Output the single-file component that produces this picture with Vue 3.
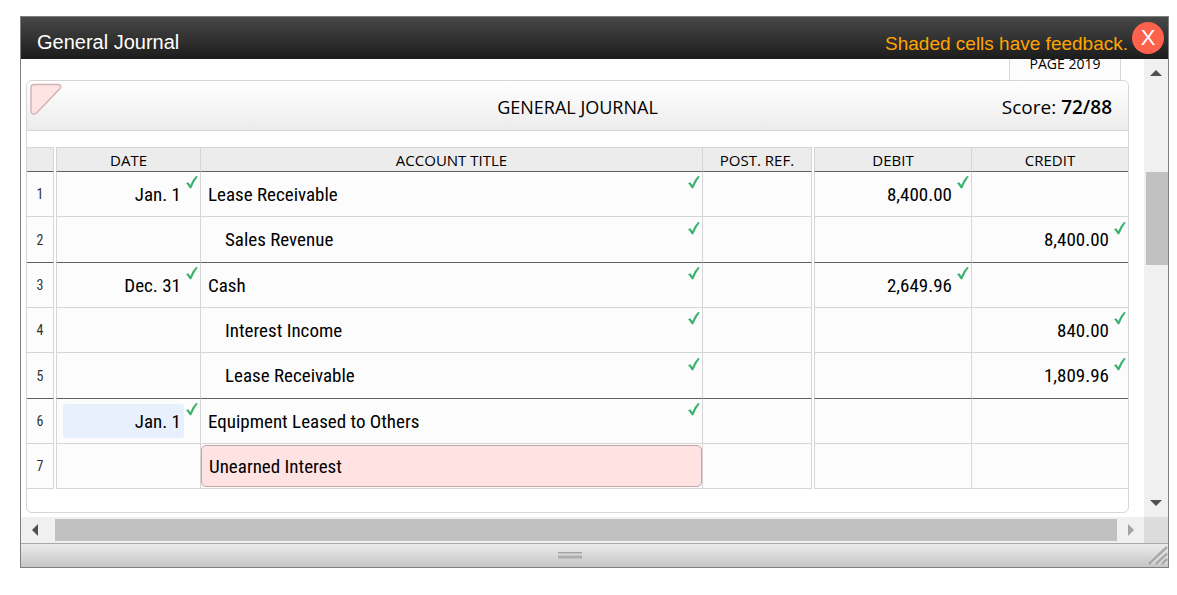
<script setup>
import { ref } from "vue";

const columns = [
  { key: "date", label: "DATE" },
  { key: "account", label: "ACCOUNT TITLE" },
  { key: "post", label: "POST. REF." },
  { key: "debit", label: "DEBIT" },
  { key: "credit", label: "CREDIT" },
];

const rows = ref([
  { date: "Jan. 1", account: "Lease Receivable", post: "", debit: "8,400.00", credit: "", ok: ["date", "account", "debit"] },
  { date: "", account: "Sales Revenue", post: "", debit: "", credit: "8,400.00", ok: ["account", "credit"], indent: true, last: true },
  { date: "Dec. 31", account: "Cash", post: "", debit: "2,649.96", credit: "", ok: ["date", "account", "debit"] },
  { date: "", account: "Interest Income", post: "", debit: "", credit: "840.00", ok: ["account", "credit"], indent: true },
  { date: "", account: "Lease Receivable", post: "", debit: "", credit: "1,809.96", ok: ["account", "credit"], indent: true, last: true },
  { date: "Jan. 1", account: "Equipment Leased to Others", post: "", debit: "", credit: "", ok: ["date", "account"], filled: "date" },
  { date: "", account: "Unearned Interest", post: "", debit: "", credit: "", ok: [], wrong: "account" },
]);
</script>

<template>
  <section class="window" aria-label="General Journal">
    <!-- Title bar -->
    <header class="titlebar">
      <h1 class="title">General Journal</h1>
      <span class="notice">Shaded cells have feedback.</span>
      <button class="close" type="button" aria-label="Close">X</button>
    </header>

    <div class="viewport">
      <div class="content">
        <div class="page-tab">PAGE 2019</div>
        <div class="card">
          <div class="card-head">
            <svg class="flag" viewBox="0 0 32 32" aria-hidden="true">
              <path
                d="M4 1.500H28.500Q32 2.500 30 5.500L6.500 30Q4 32 2 30.500Q1 30 1 28V4.500Q1 1.500 4 1.500Z"
                fill="#ffe4e4"
                stroke="#d3b4b4"
                stroke-width="1.500"
              />
            </svg>
            <h2 class="card-title">GENERAL JOURNAL</h2>
            <p class="score">Score: <strong>72/88</strong></p>
          </div>

          <table class="journal">
            <colgroup>
              <col class="c-num" />
              <col class="c-gap" />
              <col class="c-date" />
              <col />
              <col class="c-post" />
              <col class="c-gap" />
              <col class="c-debit" />
              <col class="c-credit" />
            </colgroup>
            <thead>
              <tr>
                <td class="num"></td>
                <template v-for="col in columns" :key="col.key">
                  <td v-if="col.key === 'date' || col.key === 'debit'" class="gap"></td>
                  <th :class="col.key" scope="col">{{ col.label }}</th>
                </template>
              </tr>
            </thead>
            <tbody>
              <tr v-for="(row, i) in rows" :key="i" :class="{ last: row.last }">
                <th class="num" scope="row">{{ i + 1 }}</th>
                <template v-for="col in columns" :key="col.key">
                  <td v-if="col.key === 'date' || col.key === 'debit'" class="gap"></td>
                  <td :class="[col.key, { indent: row.indent, filled: row.filled === col.key, wrong: row.wrong === col.key }]">
                    <div class="cell">
                      <input
                        v-model="row[col.key]"
                        type="text"
                        :aria-label="col.label + ' row ' + (i + 1)"
                      />
                      <svg v-if="row.ok.includes(col.key)" class="check" viewBox="0 0 12 13" aria-hidden="true">
                        <path d="M0 7.200L2.300 6.300L4.300 8.900Q6.600 3.400 10 0L11.800 0.500Q8 5.400 5.300 12.300L3.700 12.300Q2.200 9 0 7.200Z" fill="#3cb371" />
                      </svg>
                    </div>
                  </td>
                </template>
              </tr>
            </tbody>
          </table>
        </div>
      </div>

      <!-- Scrollbars -->
      <div class="vbar">
        <button type="button" aria-label="Scroll up">
          <svg width="12" height="6" viewBox="0 0 12 6"><path d="M0 6L6 0L12 6Z" fill="#505050" /></svg>
        </button>
        <div class="vtrack"><div class="vthumb"></div></div>
        <button type="button" aria-label="Scroll down">
          <svg width="12" height="6" viewBox="0 0 12 6"><path d="M0 0L6 6L12 0Z" fill="#505050" /></svg>
        </button>
      </div>
      <div class="hbar">
        <button type="button" aria-label="Scroll left">
          <svg width="6" height="12" viewBox="0 0 6 12"><path d="M6 0L0 6L6 12Z" fill="#505050" /></svg>
        </button>
        <div class="hthumb"></div>
        <button type="button" aria-label="Scroll right">
          <svg width="6" height="12" viewBox="0 0 6 12"><path d="M0 0L6 6L0 12Z" fill="#a3a3a3" /></svg>
        </button>
      </div>
      <div class="corner"></div>
    </div>

    <footer class="statusbar">
      <svg class="grip" viewBox="0 0 24 8" aria-hidden="true">
        <path d="M0 0.500H24" stroke="#a4a4a4" />
        <path d="M0 1.500H24M0 3.500H24" stroke="#c2c2c2" />
        <path d="M0 5H24" stroke="#adadad" stroke-width="2" />
        <path d="M0 6.500H24" stroke="#bdbdbd" />
      </svg>
      <svg class="resize" viewBox="0 0 20 20" aria-hidden="true">
        <path d="M3 18L19 4M10 18L19 10M16 18L19 15" stroke="#e4e4e4" stroke-width="2" />
        <path d="M1 18L19 1M8 18L19 7.500M14 18L19 13" stroke="#aaa" stroke-width="2.500" />
      </svg>
    </footer>
  </section>
</template>

<style>
body {
  margin: 0;
  background: #fff;
}
</style>

<style scoped>
* {
  box-sizing: border-box;
}

.window {
  margin: 16px 8px 24px 20px;
  border: 1px solid #7f7f7f;
  font-family: "Open Sans", "Noto Sans", sans-serif;
  color: #000;
}

button {
  border: none;
  padding: 0;
  cursor: pointer;
}

/* === TITLE BAR === */
.titlebar {
  display: flex;
  align-items: center;
  height: 42px;
  padding: 0 4px 0 16px;
  background: linear-gradient(#484848, #1c1c1c);
  font-family: "Liberation Sans", Arial, sans-serif;
}

.title {
  flex: 1;
  margin: 0;
  padding-top: 8px;
  font-size: 20px;
  font-weight: 400;
  color: #fff;
}

.notice {
  padding-top: 12px;
  font-size: 19px;
  color: #ffa500;
}

.close {
  width: 32px;
  height: 32px;
  margin-left: 4px;
  border-radius: 50%;
  background: #ff624c;
  color: #fff;
  font-family: inherit;
  font-size: 22px;
  line-height: 32px;
}

/* === VIEWPORT === */
.viewport {
  display: grid;
  grid-template-columns: 1fr 24px;
  grid-template-rows: auto 26px;
}

.content {
  min-width: 0;
  padding: 0 15px 4px 5px;
  overflow: hidden;
}

.page-tab {
  width: 112px;
  height: 34px;
  margin: -13px 8px 0 auto;
  border: 1px solid #d6d6d6;
  border-bottom: none;
  background: #fcfcfc;
  font-size: 14px;
  line-height: 34px;
  text-align: center;
}

.card {
  padding-bottom: 23px;
  border: 1px solid #d6d6d6;
  border-radius: 6px;
}

.card-head {
  display: grid;
  grid-template-columns: 1fr auto 1fr;
  align-items: center;
  height: 50px;
  margin-bottom: 16px;
  padding-top: 2px;
  border-bottom: 1px solid #d6d6d6;
  border-radius: 6px 6px 0 0;
  background: linear-gradient(#fff, #ececec);
}

.flag {
  width: 32px;
  height: 32px;
  align-self: start;
  margin-left: 3px;
}

.card-title {
  margin: 0;
  font-size: 18px;
  font-weight: 400;
}

.score {
  margin: 0;
  padding-right: 16px;
  font-size: 19px;
  text-align: right;
}

.score strong {
  font-weight: 600;
}

/* === JOURNAL TABLE === */
.journal {
  width: 100%;
  table-layout: fixed;
  border-collapse: separate;
  border-spacing: 0;
}

.c-num {
  width: 27px;
}

.c-gap {
  width: 2px;
}

.c-date {
  width: 145px;
}

.c-post {
  width: 109px;
}

.c-debit {
  width: 158px;
}

.c-credit {
  width: 156px;
}

.journal th,
.journal td {
  height: 45px;
  padding: 0;
  border-right: 1px solid #d6d6d6;
  border-bottom: 1px solid #d6d6d6;
  background: #fcfcfc;
  font-weight: 400;
}

.journal thead th,
.journal thead td {
  height: 25px;
  border-top: 1px solid #d6d6d6;
  border-bottom-color: #606060;
  background: #ececec;
  font-size: 15px;
  line-height: 20px;
}

.journal .last th,
.journal .last td {
  height: 46px;
  border-bottom-color: #606060;
}

.journal .date,
.journal .debit {
  border-left: 1px solid #d6d6d6;
}

.journal .credit {
  border-right: none;
}

.journal tr .gap {
  border: none;
  background: #fff;
}

.journal tbody .num {
  font-family: "Roboto Condensed", Roboto, sans-serif;
  font-size: 14px;
  color: #333;
}

.cell {
  position: relative;
  display: flex;
  align-items: center;
  height: 44px;
  padding: 0 16px 0 6px;
}

.cell input {
  width: 100%;
  min-width: 0;
  height: 34px;
  padding: 0 3px 0 1px;
  border: none;
  border-radius: 3px;
  outline: none;
  background: transparent;
  color: #000;
  font-family: "Roboto Condensed", Roboto, sans-serif;
  font-size: 19px;
}

.date input,
.debit input,
.credit input {
  text-align: right;
}

.account.indent input {
  padding-left: 18px;
}

.filled input {
  background: #e8f0fe;
}

.wrong .cell {
  height: 42px;
  margin: 1px 0;
  border: 1px solid #c3a5a5;
  border-radius: 5px;
  background: #ffe3e3;
}

.check {
  position: absolute;
  top: 4px;
  right: 2px;
  width: 12px;
  height: 13px;
}

/* === SCROLLBARS === */
.vbar {
  display: flex;
  flex-direction: column;
  background: #f0f0f0;
}

.vbar button {
  display: flex;
  align-items: center;
  justify-content: center;
  height: 28px;
  background: none;
}

.vtrack {
  flex: 1;
  display: flex;
  flex-direction: column;
  padding-left: 2px;
}

.vtrack::before {
  content: "";
  flex: 85;
}

.vthumb {
  flex: 93;
  background: #c1c1c1;
}

.vtrack::after {
  content: "";
  flex: 224;
}

.hbar {
  display: flex;
  padding: 2px 0;
  background: #f0f0f0;
}

.hbar button {
  display: flex;
  align-items: center;
  justify-content: center;
  width: 27px;
  background: none;
}

.hthumb {
  flex: 1;
  margin-left: 7px;
  background: #c1c1c1;
}

.corner {
  background: #dcdcdc;
}

/* === STATUS BAR === */
.statusbar {
  display: grid;
  grid-template-columns: 44fr 24px 48fr;
  align-items: center;
  height: 24px;
  border-top: 1px solid #a9a9a9;
  background: linear-gradient(#ebebeb, #c6c6c6);
}

.grip {
  grid-column: 2;
  width: 24px;
  height: 8px;
}

.resize {
  justify-self: end;
  width: 20px;
  height: 20px;
}
</style>
